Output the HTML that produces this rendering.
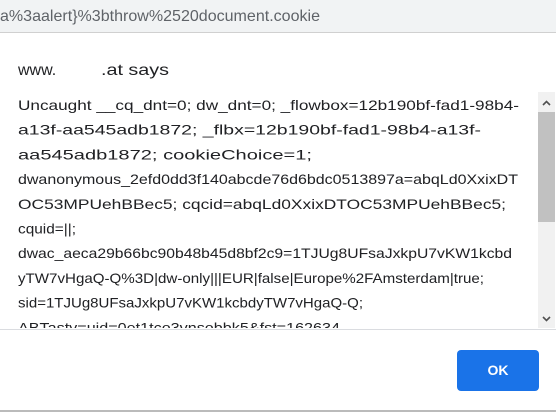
<!DOCTYPE html>
<html><head><style>
html,body{margin:0;padding:0;width:556px;height:412px;overflow:hidden;background:#fff;font-family:"Liberation Sans",sans-serif}
.top{position:absolute;left:0;top:0;width:556px;height:32px;background:#f1f3f4;border-bottom:1px solid #d0d0d0}
.btn{position:absolute;left:457px;top:350px;width:82px;height:41px;background:#1a73e8;border-radius:4px;color:#fff;font-size:14px;font-weight:bold;text-align:center;line-height:41px}
.sb{position:absolute;left:538px;top:92px;width:17px;height:236px;background:#f1f1f1}
.th{position:absolute;left:538px;top:112px;width:17px;height:110px;background:#c1c1c1}
.div{position:absolute;left:0;top:329px;width:556px;height:1px;background:#dadce0}
.bot{position:absolute;left:0;top:410px;width:556px;height:2px;background:#bbb}
</style></head><body>
<div class="top"></div>
<svg style="position:absolute;left:0;top:0" width="556" height="412">
<text x="0" y="21" font-size="16" fill="#5f6368" textLength="320" lengthAdjust="spacingAndGlyphs" font-family="Liberation Sans">a%3aalert}%3bthrow%2520document.cookie</text>
<text x="18" y="75" font-size="16" fill="#202124" font-family="Liberation Sans">www.</text>
<text x="101" y="75" font-size="16" fill="#202124" textLength="68" lengthAdjust="spacingAndGlyphs" font-family="Liberation Sans">.at says</text>
<g font-size="14" fill="#202124" font-family="Liberation Sans">
<text x="18" y="110" textLength="501" lengthAdjust="spacingAndGlyphs">Uncaught __cq_dnt=0; dw_dnt=0; _flowbox=12b190bf-fad1-98b4-</text>
<text x="18" y="134.7" textLength="463" lengthAdjust="spacingAndGlyphs">a13f-aa545adb1872; _flbx=12b190bf-fad1-98b4-a13f-</text>
<text x="18" y="159.4" textLength="294" lengthAdjust="spacingAndGlyphs">aa545adb1872; cookieChoice=1;</text>
<text x="18" y="184.1" textLength="500" lengthAdjust="spacingAndGlyphs">dwanonymous_2efd0dd3f140abcde76d6bdc0513897a=abqLd0XxixDT</text>
<text x="18" y="208.8" textLength="488" lengthAdjust="spacingAndGlyphs">OC53MPUehBBec5; cqcid=abqLd0XxixDTOC53MPUehBBec5;</text>
<text x="18" y="233.5" textLength="58" lengthAdjust="spacingAndGlyphs">cquid=||;</text>
<text x="18" y="258.2" textLength="494" lengthAdjust="spacingAndGlyphs">dwac_aeca29b66bc90b48b45d8bf2c9=1TJUg8UFsaJxkpU7vKW1kcbd</text>
<text x="18" y="282.9" textLength="466" lengthAdjust="spacingAndGlyphs">yTW7vHgaQ-Q%3D|dw-only|||EUR|false|Europe%2FAmsterdam|true;</text>
<text x="18" y="307.6" textLength="345" lengthAdjust="spacingAndGlyphs">sid=1TJUg8UFsaJxkpU7vKW1kcbdyTW7vHgaQ-Q;</text>
<text x="18" y="332.3" textLength="322" lengthAdjust="spacingAndGlyphs">ABTasty=uid=0et1tco3vnsobbk5&amp;fst=162634</text>
</g>
</svg>
<div style="position:absolute;left:0;top:328px;width:556px;height:84px;background:#fff"></div>
<div class="sb"></div><div class="th"></div>
<svg style="position:absolute;left:538px;top:92px" width="17" height="236">
<path d="M5 13 L8.5 9.5 L12 13" stroke="#505050" stroke-width="1.6" fill="none"/>
<path d="M5 225 L8.5 228.5 L12 225" stroke="#505050" stroke-width="1.6" fill="none"/>
</svg>
<div class="div"></div>
<div class="btn">OK</div>
<div class="bot"></div>
</body></html>
